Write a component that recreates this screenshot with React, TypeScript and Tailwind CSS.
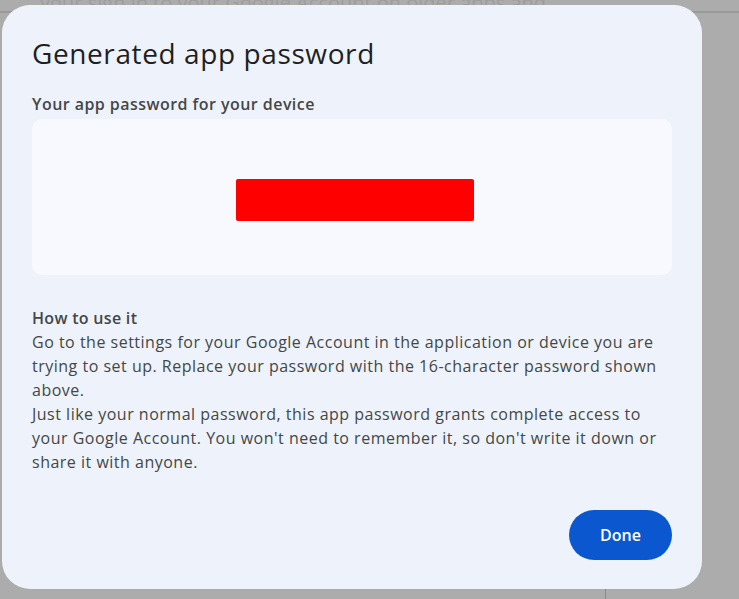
export default function App() {
  return (
    <div
      className="relative w-[739px] h-[599px] overflow-hidden bg-[#acacac] pl-[2px] pt-[5px]"
      style={{ fontFamily: "'Open Sans', Roboto, sans-serif" }}
    >
      {/* dimmed page behind the dialog */}
      <div className="absolute left-0 right-0 top-[11px] h-[2px] bg-[#9a9a9a]" />
      <div className="absolute left-[605px] top-[589px] h-[10px] w-px bg-[#8a8a8a]" />
      <div className="absolute left-[40px] -top-[12px] text-[20px] text-[#9e9e9e] whitespace-nowrap">
        your sign in to your Google Account on older apps and
      </div>

      <div className="relative flex h-[584px] w-[700px] flex-col rounded-[28px] bg-[#eef3fb] px-[30px] pt-[30px] pb-[29px]">
        <h1 className="text-[28px] leading-[36px] tracking-[0.6px] text-[#1f1f1f]">Generated app password</h1>

        <div className="mt-[21px] text-[16px] font-semibold leading-[24px] tracking-[0.45px] text-[#444746]">
          Your app password for your device
        </div>

        <div className="mt-[3px] flex h-[156px] w-[640px] items-center justify-center rounded-[10px] bg-[#f7f9fe] pl-[6px] pt-[5px]">
          <div className="h-[42px] w-[238px] rounded-[2px] bg-[#ff0000]" />
        </div>

        <div className="mt-[31px] text-[16px] font-semibold leading-[24px] tracking-[0.3px] text-[#444746]">
          How to use it
        </div>
        <p className="w-[640px] text-[16px] leading-[24px] tracking-[0.5px] text-[#444746]">
          Go to the settings for your Google Account in the application or device you are trying to set up. Replace
          your password with the 16-character password shown above.
          <br />
          Just like your normal password, this app password grants complete access to your Google Account. You
          won't need to remember it, so don't write it down or share it with anyone.
        </p>

        <div className="mt-auto flex justify-end">
          <button className="h-[50px] w-[103px] rounded-full bg-[#0b57d0] text-[16px] font-semibold text-white">
            Done
          </button>
        </div>
      </div>
    </div>
  );
}
